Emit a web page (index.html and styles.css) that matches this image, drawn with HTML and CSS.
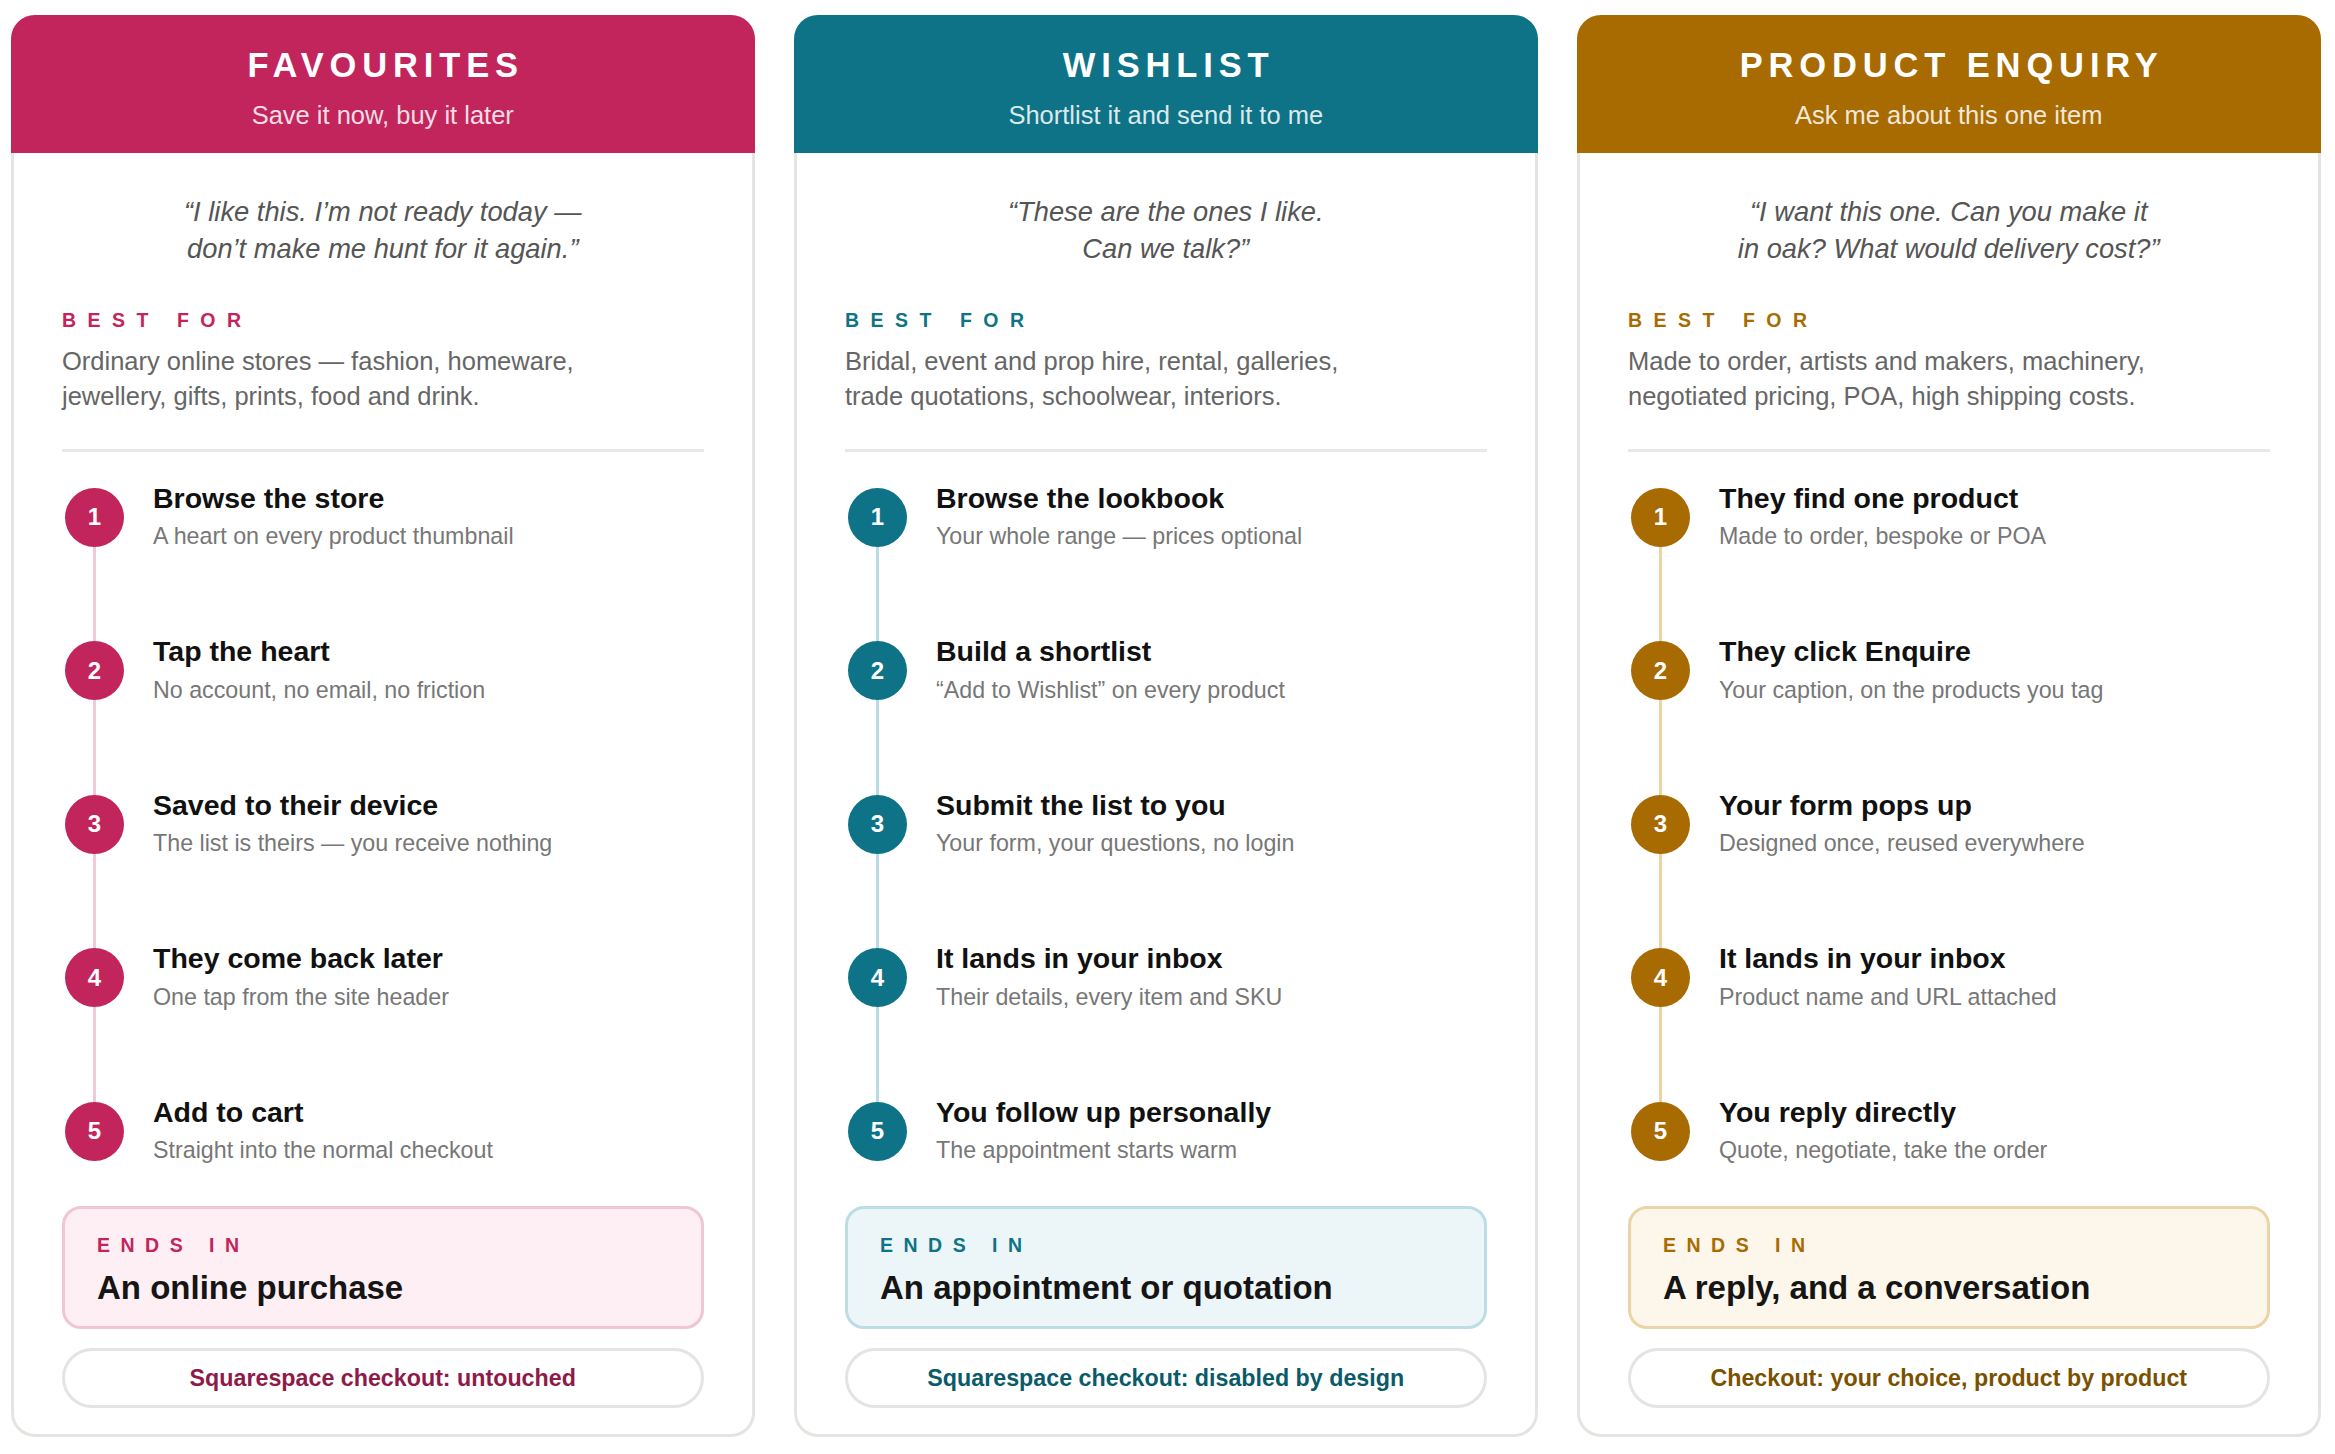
FILE: index.html
```html
<!DOCTYPE html>
<html lang="en">
<head>
<meta charset="utf-8">
<title>Favourites, Wishlist, Product Enquiry</title>
<link rel="stylesheet" href="styles.css">
</head>
<body>
<div class="grid">

  <section class="card fav">
    <header class="head">
      <h2 class="title">FAVOURITES</h2>
      <p class="sub">Save it now, buy it later</p>
    </header>
    <div class="body">
      <p class="quote">“I like this. I’m not ready today —<br>don’t make me hunt for it again.”</p>
      <div class="label">BEST FOR</div>
      <p class="desc">Ordinary online stores — fashion, homeware,<br>jewellery, gifts, prints, food and drink.</p>
      <hr class="divider">
      <ol class="steps">
        <li class="step"><span class="num">1</span><div class="txt"><div class="st">Browse the store</div><div class="sd">A heart on every product thumbnail</div></div></li>
        <li class="step"><span class="num">2</span><div class="txt"><div class="st">Tap the heart</div><div class="sd">No account, no email, no friction</div></div></li>
        <li class="step"><span class="num">3</span><div class="txt"><div class="st">Saved to their device</div><div class="sd">The list is theirs — you receive nothing</div></div></li>
        <li class="step"><span class="num">4</span><div class="txt"><div class="st">They come back later</div><div class="sd">One tap from the site header</div></div></li>
        <li class="step"><span class="num">5</span><div class="txt"><div class="st">Add to cart</div><div class="sd">Straight into the normal checkout</div></div></li>
      </ol>
      <div class="ends">
        <div class="ends-label">ENDS IN</div>
        <div class="ends-main">An online purchase</div>
      </div>
      <div class="pill">Squarespace checkout: untouched</div>
    </div>
  </section>

  <section class="card wish">
    <header class="head">
      <h2 class="title">WISHLIST</h2>
      <p class="sub">Shortlist it and send it to me</p>
    </header>
    <div class="body">
      <p class="quote">“These are the ones I like.<br>Can we talk?”</p>
      <div class="label">BEST FOR</div>
      <p class="desc">Bridal, event and prop hire, rental, galleries,<br>trade quotations, schoolwear, interiors.</p>
      <hr class="divider">
      <ol class="steps">
        <li class="step"><span class="num">1</span><div class="txt"><div class="st">Browse the lookbook</div><div class="sd">Your whole range — prices optional</div></div></li>
        <li class="step"><span class="num">2</span><div class="txt"><div class="st">Build a shortlist</div><div class="sd">“Add to Wishlist” on every product</div></div></li>
        <li class="step"><span class="num">3</span><div class="txt"><div class="st">Submit the list to you</div><div class="sd">Your form, your questions, no login</div></div></li>
        <li class="step"><span class="num">4</span><div class="txt"><div class="st">It lands in your inbox</div><div class="sd">Their details, every item and SKU</div></div></li>
        <li class="step"><span class="num">5</span><div class="txt"><div class="st">You follow up personally</div><div class="sd">The appointment starts warm</div></div></li>
      </ol>
      <div class="ends">
        <div class="ends-label">ENDS IN</div>
        <div class="ends-main">An appointment or quotation</div>
      </div>
      <div class="pill">Squarespace checkout: disabled by design</div>
    </div>
  </section>

  <section class="card enq">
    <header class="head">
      <h2 class="title">PRODUCT ENQUIRY</h2>
      <p class="sub">Ask me about this one item</p>
    </header>
    <div class="body">
      <p class="quote">“I want this one. Can you make it<br>in oak? What would delivery cost?”</p>
      <div class="label">BEST FOR</div>
      <p class="desc">Made to order, artists and makers, machinery,<br>negotiated pricing, POA, high shipping costs.</p>
      <hr class="divider">
      <ol class="steps">
        <li class="step"><span class="num">1</span><div class="txt"><div class="st">They find one product</div><div class="sd">Made to order, bespoke or POA</div></div></li>
        <li class="step"><span class="num">2</span><div class="txt"><div class="st">They click Enquire</div><div class="sd">Your caption, on the products you tag</div></div></li>
        <li class="step"><span class="num">3</span><div class="txt"><div class="st">Your form pops up</div><div class="sd">Designed once, reused everywhere</div></div></li>
        <li class="step"><span class="num">4</span><div class="txt"><div class="st">It lands in your inbox</div><div class="sd">Product name and URL attached</div></div></li>
        <li class="step"><span class="num">5</span><div class="txt"><div class="st">You reply directly</div><div class="sd">Quote, negotiate, take the order</div></div></li>
      </ol>
      <div class="ends">
        <div class="ends-label">ENDS IN</div>
        <div class="ends-main">A reply, and a conversation</div>
      </div>
      <div class="pill">Checkout: your choice, product by product</div>
    </div>
  </section>

</div>
</body>
</html>
```

FILE: styles.css
```css
* { box-sizing: border-box; }

html, body {
  margin: 0;
  background: #ffffff;
}

body {
  height: 1454px;
  padding: 15px 14.5px 17px 11px;
  font-family: "Liberation Sans", Arial, Helvetica, sans-serif;
  color: #111;
}

.grid {
  height: 100%;
  display: grid;
  grid-template-columns: repeat(3, 1fr);
  gap: 39.5px;
}

/* colour themes */
.fav  { --c: #c2255c; --dark: #8e1a48; --line: #f1c8d6; --tint: #fdeff4; --tintb: #efc6d5; }
.wish { --c: #0e7387; --dark: #0a5b69; --line: #b9dce2; --tint: #ecf6f8; --tintb: #bcdde3; }
.enq  { --c: #a86b02; --dark: #7b5100; --line: #ecd4a2; --tint: #fdf6ea; --tintb: #ebd4a7; }

.card {
  display: flex;
  flex-direction: column;
  border: 3px solid #e4e4e1;
  border-radius: 24px;
  background: #fff;
}

.head {
  margin: -3px -3px 0;
  background: var(--c);
  border-radius: 24px 24px 0 0;
  padding: 31px 20px 23px;
  text-align: center;
  color: #fff;
}

.title {
  margin: 0;
  font-size: 34.5px;
  line-height: 39.6px;
  font-weight: 700;
  letter-spacing: 0.17em;
  padding-left: 0.17em;
}

.sub {
  margin: 14px 0 0;
  font-size: 25.5px;
  line-height: 30.6px;
  color: rgba(255, 255, 255, 0.86);
}

.body {
  flex: 1;
  display: flex;
  flex-direction: column;
  padding: 39.5px 48px 26px;
}

.quote {
  margin: 0;
  text-align: center;
  font-style: italic;
  font-size: 27.3px;
  line-height: 37px;
  color: #555;
}

.label {
  margin-top: 42px;
  font-size: 19.5px;
  line-height: 23px;
  font-weight: 700;
  letter-spacing: 11.5px;
  color: var(--c);
}

.desc {
  margin: 12px 0 0;
  font-size: 25.5px;
  line-height: 35px;
  color: #666;
}

.divider {
  margin: 35px 0 0;
  border: 0;
  height: 3px;
  background: #e8e8e8;
}

.steps {
  position: relative;
  flex: 1;
  list-style: none;
  margin: 30px 0 39px;
  padding: 0 0 0 3px;
  display: flex;
  flex-direction: column;
  justify-content: space-between;
}

/* connecting line drawn behind the numbered circles */
.steps::before {
  content: "";
  position: absolute;
  left: 31px;
  top: 36px;
  bottom: 36px;
  width: 3px;
  background: var(--line);
}

.step {
  position: relative;
  display: flex;
  align-items: center;
  gap: 29px;
}

.num {
  flex: none;
  width: 59px;
  height: 59px;
  border-radius: 50%;
  background: var(--c);
  color: #fff;
  font-weight: 700;
  font-size: 24px;
  display: flex;
  align-items: center;
  justify-content: center;
}

.st {
  font-size: 28.5px;
  line-height: 32.8px;
  font-weight: 700;
  color: #111;
}

.sd {
  margin-top: 6px;
  font-size: 23.25px;
  line-height: 32.5px;
  color: #777;
}

.ends {
  border: 3px solid var(--tintb);
  background: var(--tint);
  border-radius: 19px;
  padding: 25px 32px 19px;
}

.ends-label {
  font-size: 19.5px;
  line-height: 23px;
  font-weight: 700;
  letter-spacing: 10.5px;
  color: var(--c);
}

.ends-main {
  margin-top: 12px;
  font-size: 33px;
  line-height: 38px;
  font-weight: 700;
  color: #151515;
}

.pill {
  margin-top: 19px;
  height: 60px;
  border: 3px solid #e4e4e2;
  border-radius: 30px;
  display: flex;
  align-items: center;
  justify-content: center;
  font-size: 23.25px;
  font-weight: 700;
  color: var(--dark);
}
```
